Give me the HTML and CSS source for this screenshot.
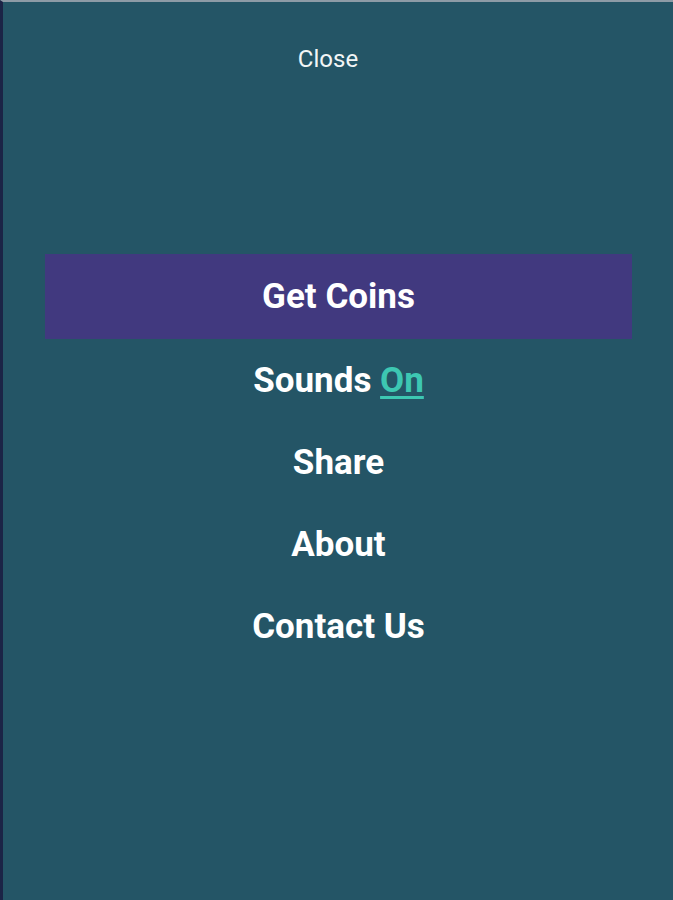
FILE: index.html
```html
<!DOCTYPE html>
<html>
<head>
<meta charset="utf-8">
<link rel="stylesheet" href="styles.css">
</head>
<body>
<div class="screen">
  <div class="top">
    <span class="close">Close</span>
  </div>
  <nav class="menu">
    <div class="item active">Get Coins</div>
    <div class="item">Sounds <span class="on">On</span></div>
    <div class="item">Share</div>
    <div class="item">About</div>
    <div class="item">Contact Us</div>
  </nav>
</div>
</body>
</html>
```
FILE: styles.css
```css
html, body {
  margin: 0;
  padding: 0;
  background: #245566;
}
.screen {
  width: 673px;
  height: 900px;
  box-sizing: border-box;
  background: #245566;
  border-top: 2px solid #8d9ba6;
  border-left: 3px solid #1b2446;
  font-family: Roboto, "Noto Sans", sans-serif;
  color: #ffffff;
}
.top {
  height: 252px;
  display: flex;
  justify-content: center;
  padding-right: 20px;
  box-sizing: border-box;
}
.close {
  font-size: 24px;
  margin-top: 42px;
  line-height: 30px;
  height: 30px;
  color: #f2f5f6;
}
.menu {
  display: flex;
  flex-direction: column;
  padding: 0 41px 0 42px;
}
.item {
  height: 82px;
  display: flex;
  align-items: center;
  justify-content: center;
  font-size: 35px;
  font-weight: 700;
  white-space: pre;
}
.item.active {
  height: 85px;
  background: #41397f;
}
.on {
  color: #3dc7b2;
  text-decoration: underline;
  text-decoration-thickness: 3px;
  text-underline-offset: 4px;
}
```
